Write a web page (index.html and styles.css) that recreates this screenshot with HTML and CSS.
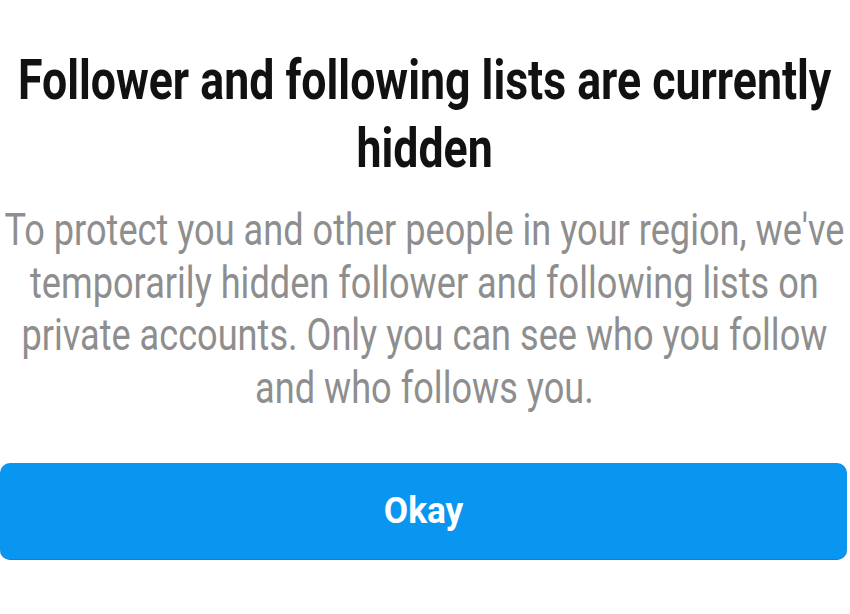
FILE: index.html
```html
<!DOCTYPE html>
<html>
<head>
<meta charset="utf-8">
<link rel="stylesheet" href="styles.css">
</head>
<body>
<div class="dialog">
  <h1 class="title">
    <span class="line">Follower and following lists are currently</span>
    <span class="line">hidden</span>
  </h1>
  <p class="body">
    <span class="line">To protect you and other people in your region, we've</span>
    <span class="line">temporarily hidden follower and following lists on</span>
    <span class="line">private accounts. Only you can see who you follow</span>
    <span class="line">and who follows you.</span>
  </p>
  <button class="okay"><span class="okay-label">Okay</span></button>
</div>
</body>
</html>
```
FILE: styles.css
```css
html, body {
  margin: 0;
  padding: 0;
  background: #ffffff;
  overflow: hidden;
}
.dialog {
  width: 850px;
  height: 614px;
  display: flex;
  flex-direction: column;
  font-family: Roboto, "Liberation Sans", sans-serif;
}
.line {
  white-space: nowrap;
  display: block;
}
.title {
  margin: 46px 0 0 0;
  font-size: 56px;
  line-height: 68px;
  font-weight: 700;
  color: #111111;
  display: flex;
  flex-direction: column;
  align-items: center;
  transform: scaleX(0.797);
  transform-origin: 423px 0;
}
.body {
  margin: 22px 0 0 0;
  font-size: 45px;
  line-height: 52.5px;
  font-weight: 400;
  color: #8e8e8e;
  display: flex;
  flex-direction: column;
  align-items: center;
  transform: scaleX(0.803);
  transform-origin: 422px 0;
}
.okay {
  margin: 49px 3px 0 0;
  height: 97px;
  border: none;
  border-bottom: 1px solid #1a7fc8;
  border-radius: 10px;
  background: #0996f0;
  color: #ffffff;
  font-family: Roboto, "Liberation Sans", sans-serif;
  font-size: 36px;
  font-weight: 700;
  display: flex;
  align-items: center;
  justify-content: center;
  padding: 0;
}
.okay-label {
  display: inline-block;
  transform: scaleX(0.98);
}
```
